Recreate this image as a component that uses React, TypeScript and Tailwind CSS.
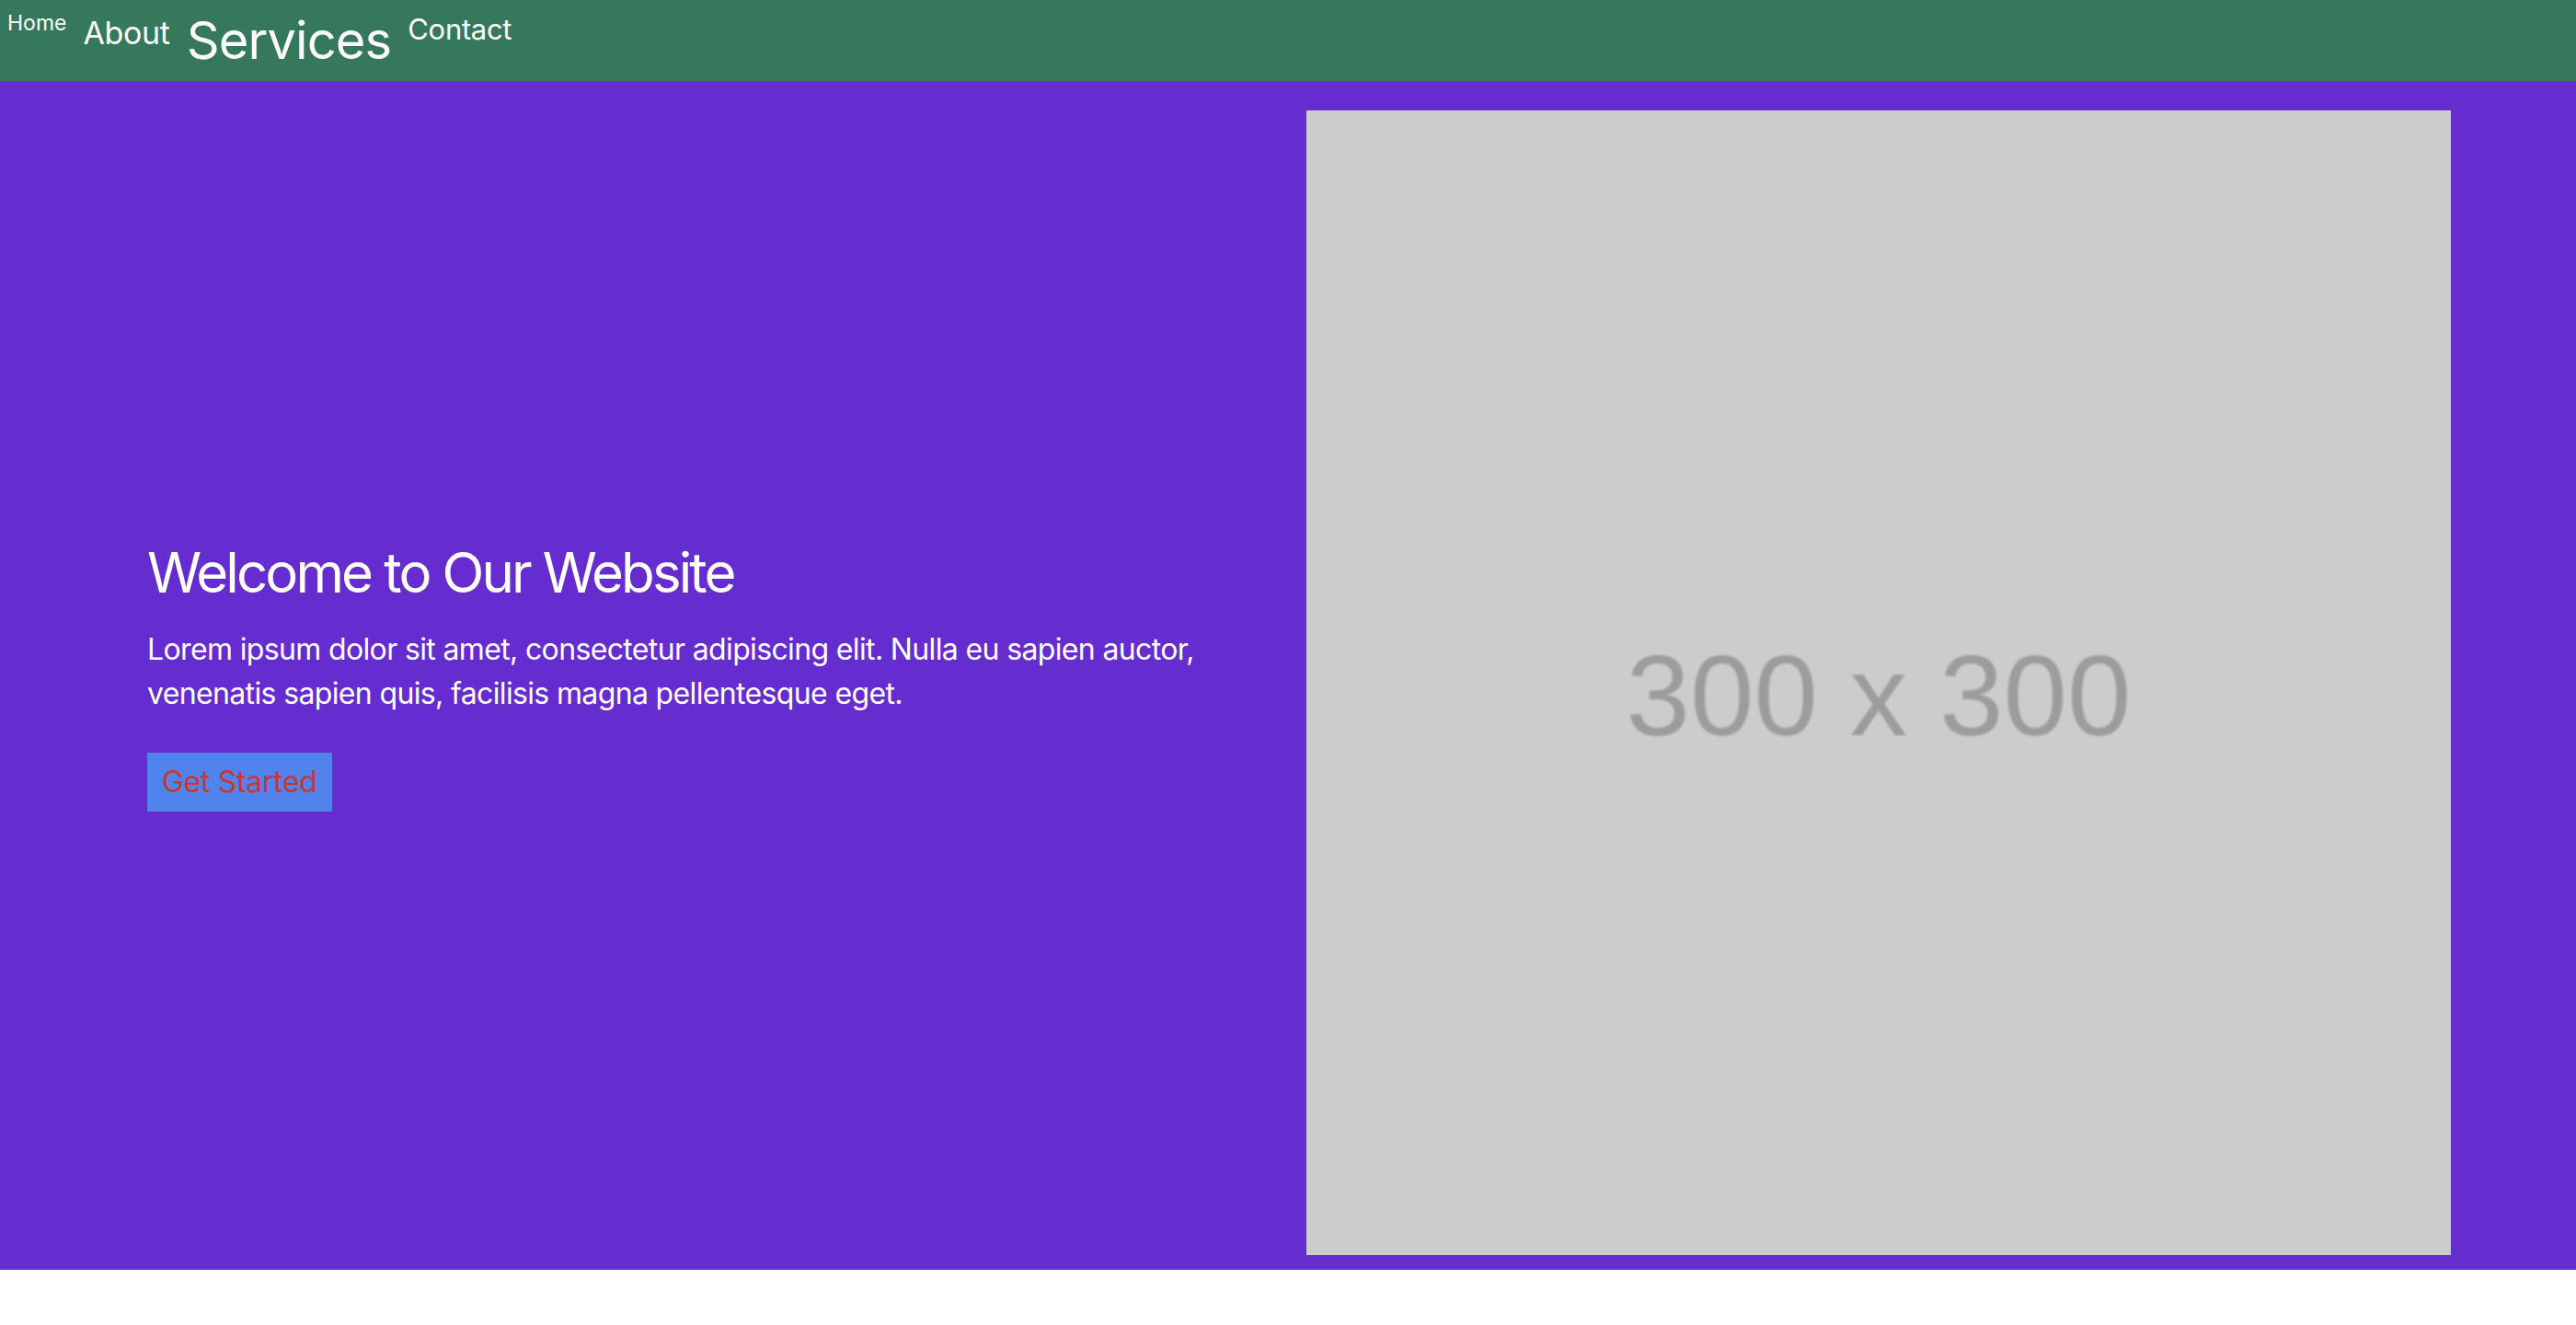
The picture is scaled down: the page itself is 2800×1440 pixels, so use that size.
export default function App() {
  return (
    <div className="min-h-screen bg-white" style={{ fontFamily: "Inter, 'Noto Sans', sans-serif" }}>
      <nav className="flex h-[88px] items-start gap-[18px] bg-[#36785c] px-[8px] text-white">
        <a className="mt-[14px] text-[23px] leading-none">Home</a>
        <a className="mt-[19px] text-[34px] leading-none tracking-[-0.01em]">About</a>
        <a className="mt-[16px] text-[56px] leading-none tracking-[-0.016em]">Services</a>
        <a className="mt-[16px] text-[31px] leading-none tracking-[-0.01em]">Contact</a>
      </nav>
      <section className="flex items-center bg-[#652cd0] py-4">
        <div className="flex-1 pl-[160px] pr-[80px] text-white">
          <h1 className="mb-6 text-[60px] leading-[72px] tracking-[-0.048em]">Welcome to Our Website</h1>
          <p className="mb-10 text-[32px] leading-[48px] tracking-[-0.02em]">
            Lorem ipsum dolor sit amet, consectetur adipiscing elit. Nulla eu sapien auctor, venenatis sapien quis, facilisis magna pellentesque eget.
          </p>
          <button className="bg-[#5083ec] px-4 py-2 text-[32px] leading-[48px] tracking-[-0.01em] text-[#c9372f]">Get Started</button>
        </div>
        <div className="mr-[136px] mt-4 flex h-[1244px] w-[1244px] shrink-0 items-center justify-center bg-[#cccccc]">
          <span
            className="mt-[26px] text-[125px] leading-none text-[#9c9c9c] blur-[1px]"
            style={{ fontFamily: "'Liberation Sans', Arial, sans-serif" }}
          >
            300 x 300
          </span>
        </div>
      </section>
    </div>
  );
}
